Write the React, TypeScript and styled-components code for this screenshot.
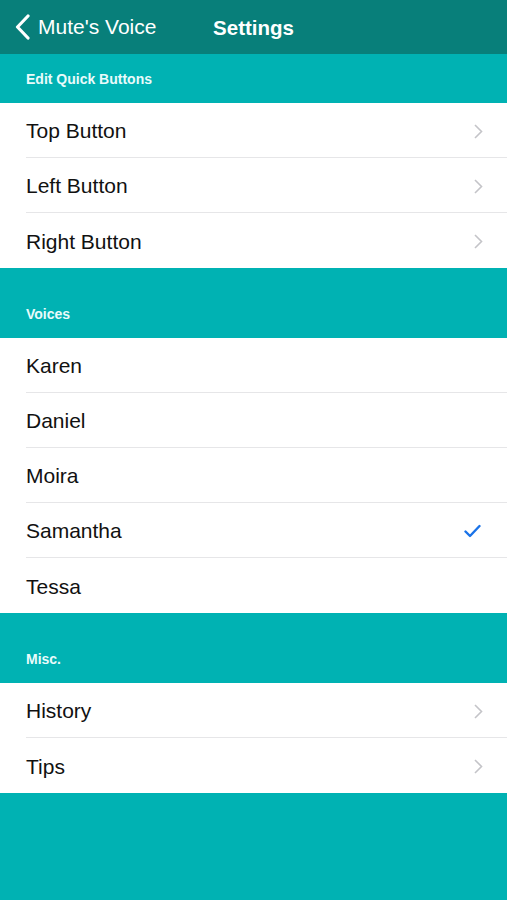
import React from "react";
import styled, { createGlobalStyle } from "styled-components";

const GlobalStyle = createGlobalStyle`
  html, body {
    margin: 0;
    padding: 0;
    background: #00b2b3;
  }
  body {
    font-family: "Liberation Sans", Arial, sans-serif;
    -webkit-font-smoothing: antialiased;
  }
`;

const Screen = styled.div`
  width: 507px;
  min-height: 900px;
  background: #00b2b3;
  display: flex;
  flex-direction: column;
`;

const NavBar = styled.div`
  position: relative;
  height: 54px;
  background: #087f7a;
  display: flex;
  align-items: center;
  justify-content: center;
  color: #fff;
`;

const BackButton = styled.div`
  position: absolute;
  left: 15px;
  top: 0;
  height: 54px;
  display: flex;
  align-items: center;
  gap: 8px;
  font-size: 21px;
`;

const Title = styled.div`
  font-size: 20.5px;
  font-weight: bold;
  padding-top: 1px;
`;

const SectionHeader = styled.div<{ $tall?: boolean }>`
  height: ${({ $tall }) => ($tall ? 70 : 49)}px;
  box-sizing: border-box;
  display: flex;
  align-items: flex-end;
  padding: 0 26px 16px;
  color: #e9fbfb;
  font-size: 14px;
  font-weight: bold;
`;

const Group = styled.div`
  background: #fff;
`;

const Row = styled.div<{ $last?: boolean }>`
  height: 55px;
  margin-left: 26px;
  padding: 2px 24px 0 0;
  box-sizing: border-box;
  display: flex;
  align-items: center;
  justify-content: space-between;
  border-bottom: ${({ $last }) => ($last ? "none" : "1px solid #e6e6e8")};
  font-size: 21px;
  color: #111;
`;

const Chevron = () => (
  <svg width="9" height="15" viewBox="0 0 9 15">
    <path d="M1 1l6.5 6.5L1 14" fill="none" stroke="#c4c4c8" strokeWidth="1.6" />
  </svg>
);

const Check = () => (
  <svg width="17" height="14" viewBox="0 0 17 14" style={{ marginRight: 2 }}>
    <path d="M1.5 7.5l4.5 4.5L15.5 2" fill="none" stroke="#1a73e8" strokeWidth="2.4" strokeLinecap="round" strokeLinejoin="round" />
  </svg>
);

const BackChevron = () => (
  <svg width="15" height="26" viewBox="0 0 15 26">
    <path d="M13 2L2.5 13 13 24" fill="none" stroke="#fff" strokeWidth="3.2" strokeLinecap="round" strokeLinejoin="round" />
  </svg>
);

type Item = { label: string; accessory?: "chevron" | "check" };

const Section = ({ title, tall, items }: { title: string; tall?: boolean; items: Item[] }) => (
  <>
    <SectionHeader $tall={tall}>{title}</SectionHeader>
    <Group>
      {items.map((it, i) => (
        <Row key={it.label} $last={i === items.length - 1}>
          <span>{it.label}</span>
          {it.accessory === "chevron" && <Chevron />}
          {it.accessory === "check" && <Check />}
        </Row>
      ))}
    </Group>
  </>
);

export default function App() {
  return (
    <Screen>
      <GlobalStyle />
      <NavBar>
        <BackButton>
          <BackChevron />
          <span>Mute's Voice</span>
        </BackButton>
        <Title>Settings</Title>
      </NavBar>
      <Section
        title="Edit Quick Buttons"
        items={[
          { label: "Top Button", accessory: "chevron" },
          { label: "Left Button", accessory: "chevron" },
          { label: "Right Button", accessory: "chevron" },
        ]}
      />
      <Section
        title="Voices"
        tall
        items={[
          { label: "Karen" },
          { label: "Daniel" },
          { label: "Moira" },
          { label: "Samantha", accessory: "check" },
          { label: "Tessa" },
        ]}
      />
      <Section
        title="Misc."
        tall
        items={[
          { label: "History", accessory: "chevron" },
          { label: "Tips", accessory: "chevron" },
        ]}
      />
    </Screen>
  );
}
